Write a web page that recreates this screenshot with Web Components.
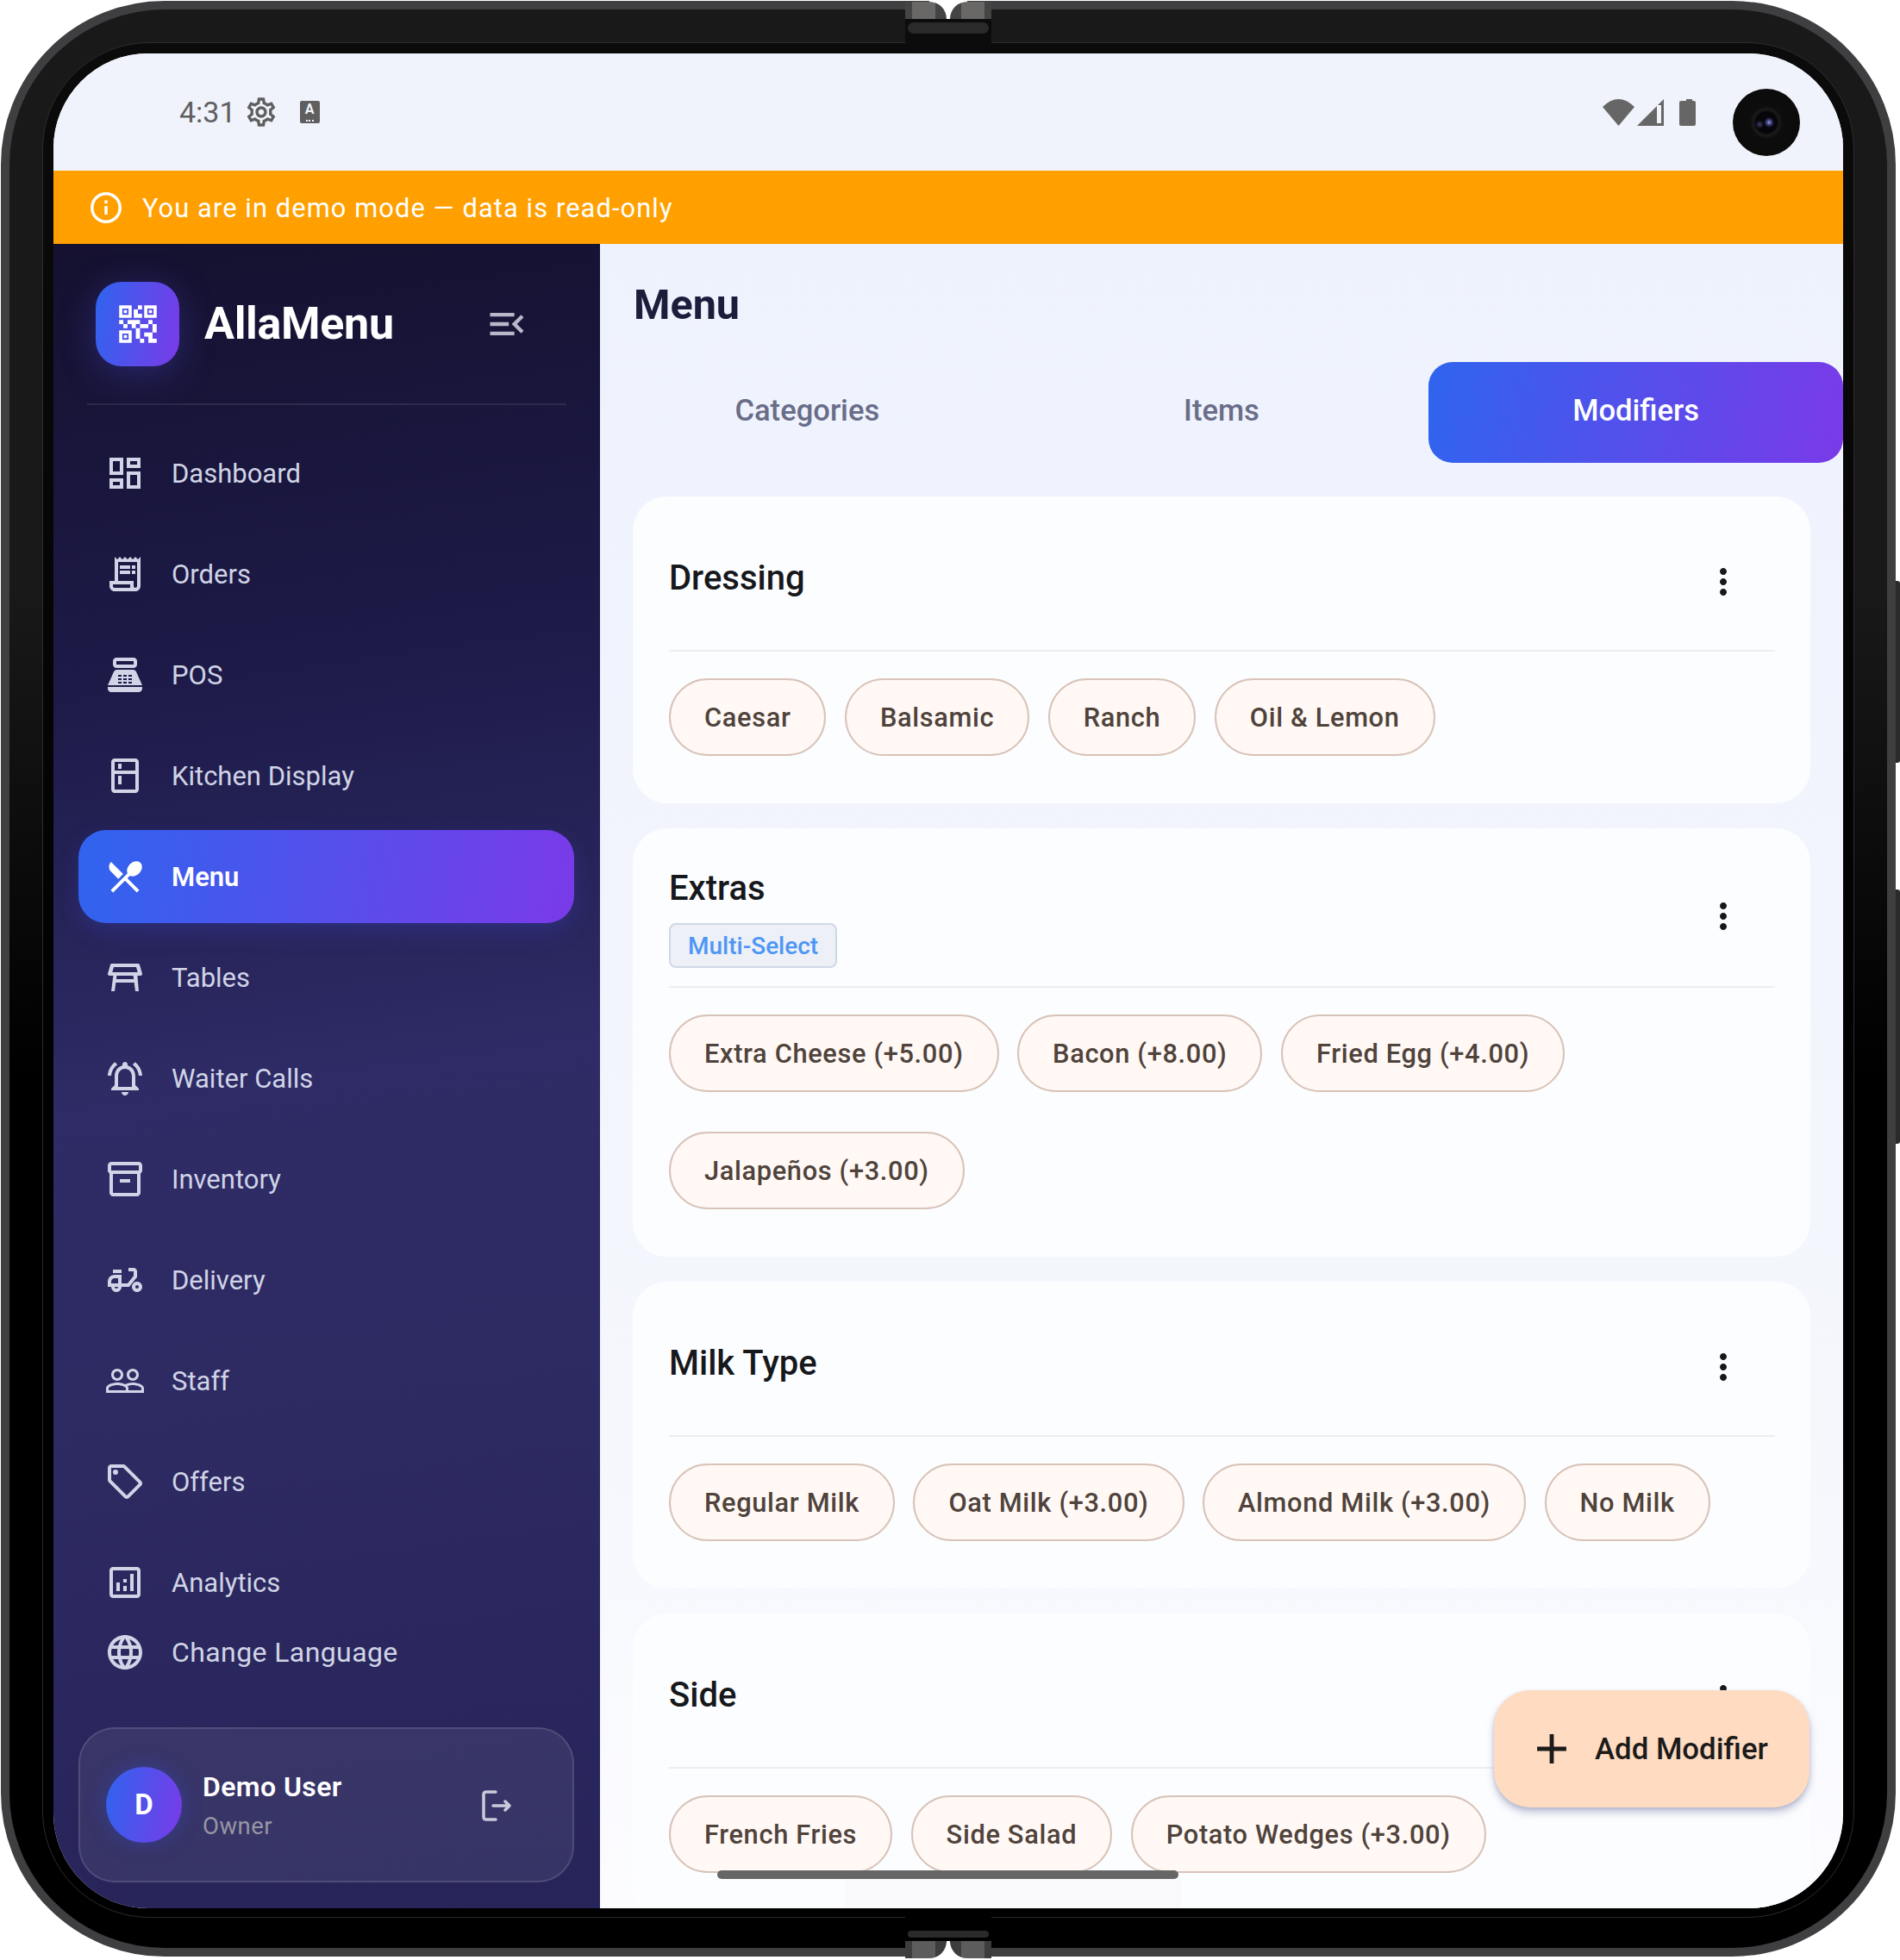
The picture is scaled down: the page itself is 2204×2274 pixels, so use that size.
<!DOCTYPE html>
<html lang="en">
<head>
<meta charset="utf-8">
<title>AllaMenu</title>
<style>
  html, body { margin: 0; background: #fff; }
  body { font-family: Roboto, "Liberation Sans", sans-serif; }
</style>
</head>
<body>
<app-device>
  <status-bar slot="screen"></status-bar>
  <demo-banner slot="screen">You are in demo mode — data is read-only</demo-banner>
  <div slot="screen" style="flex:1;display:flex;min-height:0">
    <side-nav>
      <nav-item icon="dashboard">Dashboard</nav-item>
      <nav-item icon="receipt">Orders</nav-item>
      <nav-item icon="pos">POS</nav-item>
      <nav-item icon="kitchen">Kitchen Display</nav-item>
      <nav-item icon="restaurant" active>Menu</nav-item>
      <nav-item icon="table">Tables</nav-item>
      <nav-item icon="bell">Waiter Calls</nav-item>
      <nav-item icon="inventory">Inventory</nav-item>
      <nav-item icon="delivery">Delivery</nav-item>
      <nav-item icon="people">Staff</nav-item>
      <nav-item icon="offer">Offers</nav-item>
      <nav-item icon="analytics">Analytics</nav-item>
    </side-nav>
    <menu-page>
      <modifier-card title="Dressing">
        <mod-chip>Caesar</mod-chip><mod-chip>Balsamic</mod-chip><mod-chip>Ranch</mod-chip><mod-chip>Oil &amp; Lemon</mod-chip>
      </modifier-card>
      <modifier-card title="Extras" badge="Multi-Select">
        <mod-chip>Extra Cheese (+5.00)</mod-chip><mod-chip>Bacon (+8.00)</mod-chip><mod-chip>Fried Egg (+4.00)</mod-chip><mod-chip>Jalapeños (+3.00)</mod-chip>
      </modifier-card>
      <modifier-card title="Milk Type">
        <mod-chip>Regular Milk</mod-chip><mod-chip>Oat Milk (+3.00)</mod-chip><mod-chip>Almond Milk (+3.00)</mod-chip><mod-chip>No Milk</mod-chip>
      </modifier-card>
      <modifier-card title="Side">
        <mod-chip>French Fries</mod-chip><mod-chip>Side Salad</mod-chip><mod-chip>Potato Wedges (+3.00)</mod-chip>
      </modifier-card>
    </menu-page>
  </div>
</app-device>

<script>
(function () {
  'use strict';

  var GRAD = 'linear-gradient(100deg, #2f64ee, #7a3ae8)';

  // material icon paths, 24 unit box
  var ICONS = {
    dashboard: 'M19 5v2h-4V5h4M9 5v6H5V5h4m10 8v6h-4v-6h4M9 17v2H5v-2h4M21 3h-8v6h8V3zM11 3H3v10h8V3zm10 8h-8v10h8V11zm-10 4H3v6h8v-6z',
    receipt: 'M19.5 3.5 18 2l-1.5 1.5L15 2l-1.5 1.5L12 2l-1.5 1.5L9 2 7.5 3.5 6 2v14H3v3c0 1.66 1.34 3 3 3h12c1.66 0 3-1.34 3-3V2l-1.5 1.5zM15 20H6c-.55 0-1-.45-1-1v-1h10v2zm4-1c0 .55-.45 1-1 1s-1-.45-1-1v-3H8V5h11v14zM9 7h6v2H9zm7 0h2v2h-2zm-7 3h6v2H9zm7 0h2v2h-2z',
    pos: 'M17 2H7c-1.1 0-2 .9-2 2v2c0 1.1.9 2 2 2h10c1.1 0 2-.9 2-2V4c0-1.1-.9-2-2-2zm0 4H7V4h10v2zm3 16H4c-1.1 0-2-.9-2-2v-1h20v1c0 1.1-.9 2-2 2zm-1.47-11.81C18.21 9.47 17.49 9 16.7 9H7.3c-.79 0-1.51.47-1.83 1.19L2 18h20l-3.47-7.81zM8 12h2v1H8zm0 2h2v1H8zm0 2h2v1H8zm3-4h2v1h-2zm0 2h2v1h-2zm0 2h2v1h-2zm3-4h2v1h-2zm0 2h2v1h-2zm0 2h2v1h-2z',
    kitchen: 'M18 2.01 6 2c-1.1 0-2 .89-2 2v16c0 1.1.9 2 2 2h12c1.1 0 2-.9 2-2V4c0-1.11-.9-1.99-2-1.99zM18 20H6v-9.02h12V20zm0-11H6V4h12v5zM8 5h2v3H8zm0 7h2v5H8z',
    restaurant: 'm8.1 13.34 2.83-2.83L3.91 3.5c-1.56 1.56-1.56 4.09 0 5.66l4.19 4.18zm6.78-1.81c1.53.71 3.68.21 5.27-1.38 1.91-1.91 2.28-4.65.81-6.12-1.46-1.46-4.2-1.1-6.12.81-1.59 1.59-2.09 3.74-1.38 5.27L3.7 19.87l1.41 1.41L12 14.41l6.88 6.88 1.41-1.41L13.41 13l1.47-1.47z',
    table: 'M21.96 9.73l-1.43-5c-.12-.43-.52-.73-.96-.73H4.43c-.45 0-.84.3-.96.73l-1.43 5c-.18.63.3 1.27.96 1.27h2.2L4 20h2l.67-5h10.67l.66 5h2l-.8-9H21c.66 0 1.14-.64.96-1.27zM6.93 13l.27-2h9.6l.27 2H6.93zM4.65 9l.86-3h12.97l.86 3H4.65z',
    bell: 'M7.58 4.08 6.15 2.65C3.75 4.48 2.17 7.3 2.03 10.5h2c.15-2.65 1.51-4.97 3.55-6.42zm12.39 6.42h2c-.15-3.2-1.73-6.02-4.12-7.85l-1.42 1.43c2.02 1.45 3.39 3.77 3.54 6.42zM18 11c0-3.07-1.64-5.64-4.5-6.32V4c0-.83-.67-1.5-1.5-1.5s-1.5.67-1.5 1.5v.68C7.63 5.36 6 7.92 6 11v5l-2 2v1h16v-1l-2-2v-5zm-2 6H8v-6c0-2.48 1.51-4.5 4-4.5s4 2.02 4 4.5v6zm-4 5c.14 0 .27-.01.4-.04.65-.14 1.18-.58 1.44-1.18.1-.24.15-.5.15-.78h-4c.01 1.1.9 2 2.01 2z',
    inventory: 'M20 2H4c-1 0-2 .9-2 2v3.01c0 .72.43 1.34 1 1.69V20c0 1.1 1.1 2 2 2h14c.9 0 2-.9 2-2V8.7c.57-.35 1-.97 1-1.69V4c0-1.1-1-2-2-2zm-1 18H5V9h14v11zm1-13H4V4h16v3zM9 12h6v2H9z',
    delivery: 'M19 7c0-1.1-.9-2-2-2h-3v2h3v2.65L13.52 14H10V9H6c-2.21 0-4 1.79-4 4v3h2c0 1.66 1.34 3 3 3s3-1.34 3-3h4.48L19 10.35V7zM4 14v-1c0-1.1.9-2 2-2h2v3H4zm3 3c-.55 0-1-.45-1-1h2c0 .55-.45 1-1 1zM5 6h5v2H5zM19 13c-1.66 0-3 1.34-3 3s1.34 3 3 3 3-1.34 3-3-1.34-3-3-3zm0 4c-.55 0-1-.45-1-1s.45-1 1-1 1 .45 1 1-.45 1-1 1z',
    people: 'M16.5 13c-1.2 0-3.07.34-4.5 1-1.43-.67-3.3-1-4.5-1C5.33 13 1 14.08 1 16.25V19h22v-2.75c0-2.17-4.33-3.25-6.5-3.25zm-4 4.5h-10v-1.25c0-.54 2.56-1.75 5-1.75s5 1.21 5 1.75v1.25zm9 0H14v-1.25c0-.46-.2-.86-.52-1.22.88-.3 1.96-.53 3.02-.53 2.44 0 5 1.21 5 1.75v1.25zM7.5 12c1.93 0 3.5-1.57 3.5-3.5S9.43 5 7.5 5 4 6.57 4 8.5 5.57 12 7.5 12zm0-5.5c1.1 0 2 .9 2 2s-.9 2-2 2-2-.9-2-2 .9-2 2-2zm9 5.5c1.93 0 3.5-1.57 3.5-3.5S18.43 5 16.5 5 13 6.57 13 8.5s1.57 3.5 3.5 3.5zm0-5.5c1.1 0 2 .9 2 2s-.9 2-2 2-2-.9-2-2 .9-2 2-2z',
    offer: 'M21.41 11.58l-9-9C12.05 2.22 11.55 2 11 2H4c-1.1 0-2 .9-2 2v7c0 .55.22 1.05.59 1.42l9 9c.36.36.86.58 1.41.58s1.05-.22 1.41-.59l7-7c.37-.36.59-.86.59-1.41s-.23-1.06-.59-1.42zM13 20.01L4 11V4h7v-.01l9 9-7 7.02zM6.5 5a1.5 1.5 0 1 0 0 3 1.5 1.5 0 0 0 0-3z',
    analytics: 'M9 17H7v-5h2v5zm4 0h-2v-3h2v3zm0-5h-2v-2h2v2zm4 5h-2V7h2v10zm2 2H5V5h14v14zm0-16H5c-1.1 0-2 .9-2 2v14c0 1.1.9 2 2 2h14c1.1 0 2-.9 2-2V5c0-1.1-.9-2-2-2z',
    language: 'M11.99 2C6.47 2 2 6.48 2 12s4.47 10 9.99 10C17.52 22 22 17.52 22 12S17.52 2 11.99 2zm6.93 6h-2.95c-.32-1.25-.78-2.45-1.38-3.56 1.84.63 3.37 1.91 4.33 3.56zM12 4.04c.83 1.2 1.48 2.53 1.91 3.96h-3.82c.43-1.43 1.08-2.76 1.91-3.96zM4.26 14C4.1 13.36 4 12.69 4 12s.1-1.36.26-2h3.38c-.08.66-.14 1.32-.14 2s.06 1.34.14 2H4.26zm.82 2h2.95c.32 1.25.78 2.45 1.38 3.56-1.84-.63-3.37-1.9-4.33-3.56zm2.95-8H5.08c.96-1.66 2.49-2.93 4.33-3.56C8.81 5.55 8.35 6.75 8.03 8zM12 19.96c-.83-1.2-1.48-2.53-1.91-3.96h3.82c-.43 1.43-1.08 2.76-1.91 3.96zM14.34 14H9.66c-.09-.66-.16-1.32-.16-2s.07-1.35.16-2h4.68c.09.65.16 1.32.16 2s-.07 1.34-.16 2zm.25 5.56c.6-1.11 1.06-2.31 1.38-3.56h2.95c-.96 1.65-2.49 2.93-4.33 3.56zM16.36 14c.08-.66.14-1.32.14-2s-.06-1.34-.14-2h3.38c.16.64.26 1.31.26 2s-.1 1.36-.26 2h-3.38z',
    menuOpen: 'M3 18h13v-2H3v2zm0-5h10v-2H3v2zm0-7v2h13V6H3zm18 9.59L17.42 12 21 8.41 19.59 7l-5 5 5 5L21 15.59z',
    qr: 'M15,21h-2v-2h2V21z M13,14h-2v5h2V14z M21,12h-2v4h2V12z M19,10h-2v2h2V10z M7,12H5v2h2V12z M5,10H3v2h2V10z M12,5h2V3h-2V5z M4.5,4.5v3h3v-3H4.5z M9,9H3V3h6V9z M4.5,16.5v3h3v-3H4.5z M9,21H3v-6h6V21z M16.5,4.5v3h3v-3H16.5z M21,9h-6V3h6V9z M19,19v-3l-4,0v2h2v3h4v-2H19z M17,12l-4,0v2h4V12z M13,10H7v2h2v2h2v-2h2V10z M14,9V7h-2V5h-2v4L14,9z M6.75,5.25h-1.5v1.5h1.5V5.25z M6.75,17.25h-1.5v1.5h1.5V17.25z M18.75,5.25h-1.5v1.5h1.5V5.25z',
    gear: 'M19.43 12.98c.04-.32.07-.64.07-.98 0-.34-.03-.66-.07-.98l2.11-1.65c.19-.15.24-.42.12-.64l-2-3.46c-.09-.16-.26-.25-.44-.25-.06 0-.12.01-.17.03l-2.49 1c-.52-.4-1.08-.73-1.69-.98l-.38-2.65C14.46 2.18 14.25 2 14 2h-4c-.25 0-.46.18-.49.42l-.38 2.65c-.61.25-1.17.59-1.69.98l-2.49-1c-.06-.02-.12-.03-.18-.03-.17 0-.34.09-.43.25l-2 3.46c-.13.22-.07.49.12.64l2.11 1.65c-.04.32-.07.65-.07.98 0 .33.03.66.07.98l-2.11 1.65c-.19.15-.24.42-.12.64l2 3.46c.09.16.26.25.44.25.06 0 .12-.01.17-.03l2.49-1c.52.4 1.08.73 1.69.98l.38 2.65c.03.24.24.42.49.42h4c.25 0 .46-.18.49-.42l.38-2.65c.61-.25 1.17-.59 1.69-.98l2.49 1c.06.02.12.03.18.03.17 0 .34-.09.43-.25l2-3.46c.12-.22.07-.49-.12-.64l-2.11-1.65zm-1.98-1.71c.04.31.05.52.05.73 0 .21-.02.43-.05.73l-.14 1.13.89.7 1.08.84-.7 1.21-1.27-.51-1.04-.42-.9.68c-.43.32-.84.56-1.25.73l-1.06.43-.16 1.13-.2 1.35h-1.4l-.19-1.35-.16-1.13-1.06-.43c-.43-.18-.83-.41-1.23-.71l-.91-.7-1.06.43-1.27.51-.7-1.21 1.08-.84.89-.7-.14-1.13c-.03-.31-.05-.54-.05-.74s.02-.43.05-.73l.14-1.13-.89-.7-1.08-.84.7-1.21 1.27.51 1.04.42.9-.68c.43-.32.84-.56 1.25-.73l1.06-.43.16-1.13.2-1.35h1.39l.19 1.35.16 1.13 1.06.43c.43.18.83.41 1.23.71l.91.7 1.06-.43 1.27-.51.7 1.21-1.07.85-.89.7.14 1.13zM12 8c-2.21 0-4 1.79-4 4s1.79 4 4 4 4-1.79 4-4-1.79-4-4-4zm0 6c-1.1 0-2-.9-2-2s.9-2 2-2 2 .9 2 2-.9 2-2 2z',
    moreVert: 'M12 8c1.1 0 2-.9 2-2s-.9-2-2-2-2 .9-2 2 .9 2 2 2zm0 2c-1.1 0-2 .9-2 2s.9 2 2 2 2-.9 2-2-.9-2-2-2zm0 6c-1.1 0-2 .9-2 2s.9 2 2 2 2-.9 2-2-.9-2-2-2z',
    add: 'M19 13h-6v6h-2v-6H5v-2h6V5h2v6h6v2z'
  };

  function icon(name, size) {
    return '<svg width="' + size + '" height="' + size + '" viewBox="0 0 24 24" fill="currentColor" style="display:block;flex:none"><path fill-rule="evenodd" d="' + ICONS[name] + '"/></svg>';
  }

  function shadow(el, html) {
    el.attachShadow({ mode: 'open' }).innerHTML = html;
  }

  // phone frame with the two hinges and the side buttons
  class AppDevice extends HTMLElement {
    connectedCallback() {
      shadow(this, `
        <style>
          :host { display: block; position: relative; width: 2204px; height: 2274px; overflow: hidden; }
          .shell {
            box-sizing: border-box; width: 2198px; height: 2269px; margin: 1px 0 0 1px;
            border: 10px solid #3f3f41; border-radius: 190px;
            padding: 38px 38px 35px;
            background: linear-gradient(180deg, #191919 0, #191919 30%, #000 55%);
          }
          .bezel {
            box-sizing: border-box; height: 100%;
            border: 1px solid #2c2c2c; border-radius: 124px; padding: 12px 12px 10px;
            background: linear-gradient(180deg, #0b0b0b, #000 60%);
          }
          .screen {
            position: relative; height: 100%; border-radius: 110px; overflow: hidden;
            display: flex; flex-direction: column; background: #f0f3fb;
          }
          .btn { position: absolute; left: 2199px; width: 5px; background: #2a2a2a; border-radius: 0 3px 3px 0; }
          .hinge { position: absolute; left: 1050px; width: 100px; height: 62px; }
          .hinge.top { top: 0; }
          .hinge.bottom { top: 2214px; }
          .hinge .gap { position: absolute; left: 28px; width: 44px; height: 22px; background: #fff; }
          .hinge .mid { position: absolute; left: 0; right: 0; background: #0c0c0c; }
          .hinge .pill { position: absolute; left: 3px; right: 3px; height: 13px; border-radius: 7px; background: #2a2a2a; }
          .hinge .wing { position: absolute; width: 48px; height: 20px; }
          .top .gap { top: 0; }
          .top .mid { top: 22px; bottom: 0; }
          .top .pill { top: 26px; }
          .top .wing { top: 2px; }
          .top .wing.l { left: 0; border-top-right-radius: 20px; background: linear-gradient(90deg, #454545 8px, #6a6866 8px, #6a6866 35px, #444 35px); }
          .top .wing.r { right: 0; border-top-left-radius: 20px; background: linear-gradient(270deg, #454545 8px, #6a6866 8px, #6a6866 35px, #444 35px); }
          .bottom .gap { top: 40px; }
          .bottom .mid { top: 0; height: 38px; background: #000; }
          .bottom .pill { top: 26px; height: 8px; }
          .bottom .wing { top: 38px; height: 20px; }
          .bottom .wing.l { left: 0; border-bottom-right-radius: 20px; background: linear-gradient(90deg, #3d3d3d 8px, #5c5c5c 8px, #5c5c5c 35px, #3d3d3d 35px); }
          .bottom .wing.r { right: 0; border-bottom-left-radius: 20px; background: linear-gradient(270deg, #3d3d3d 8px, #5c5c5c 8px, #5c5c5c 35px, #3d3d3d 35px); }
          .notch { position: absolute; left: 48px; width: 4px; background: #fff; }
          .top .notch { top: 0; height: 22px; }
          .bottom .notch { top: 38px; height: 22px; }
        </style>
        <div class="shell"><div class="bezel"><div class="screen"><slot name="screen"></slot>
          <div style="position:absolute;left:770px;bottom:34px;width:535px;height:10px;border-radius:5px;background:#666"></div>
        </div></div></div>
        <div class="btn" style="top:674px;height:211px"></div>
        <div class="btn" style="top:1032px;height:295px"></div>
        <div class="hinge top"><div class="gap"></div><div class="wing l"></div><div class="wing r"></div><div class="notch"></div><div class="mid"></div><div class="pill"></div></div>
        <div class="hinge bottom"><div class="mid"></div><div class="pill"></div><div class="gap"></div><div class="wing l"></div><div class="wing r"></div><div class="notch"></div></div>
      `);
    }
  }

  class StatusBar extends HTMLElement {
    connectedCallback() {
      shadow(this, `
        <style>
          :host { display: flex; align-items: center; flex: none; height: 136px; box-sizing: border-box; padding: 0 0 0 146px; color: #5f5f5f; background: #f0f3fb; position: relative; }
          .time { font: 400 34px/1 Roboto, sans-serif; margin-top: -1px; }
          .gear { margin-left: 9px; }
          .kbd { position: relative; box-sizing: border-box; margin-left: 25px; width: 23px; height: 26px; border-radius: 2px; background: #5f5f5f; color: #f0f3fb; font: 700 16px/20px Roboto, sans-serif; text-align: center; }
          .kbd::after { content: ""; position: absolute; left: 7px; bottom: 2px; width: 9px; height: 2px; background: repeating-linear-gradient(90deg, #f0f3fb 0 2px, transparent 2px 3.5px); }
          .right { margin-left: auto; display: flex; align-items: center; margin-right: 171px; }
          .cam { position: absolute; left: 1948px; top: 41px; width: 78px; height: 78px; border-radius: 50%;
                 background: radial-gradient(circle at 54% 50%, #9a9ad0 0, #3c3a78 3px, transparent 6px),
                             radial-gradient(circle at 40% 53%, #3c3a68 0, transparent 5px),
                             radial-gradient(circle at 50% 50%, #05050a 0, #05050a 12px, #1b1b1b 15px, #0d0d0d 19px, #0a0a0a 100%); }
        </style>
        <span class="time">4:31</span>
        <span class="gear">${icon('gear', 40)}</span>
        <div class="kbd">A</div>
        <div class="right">
          <svg width="108" height="33" viewBox="0 0 108 33" fill="#666" style="display:block">
            <path d="M0 10 Q18.500 -8 37 10 L18.500 32 Z"/>
            <path d="M71 1 V32 H40 Z"/>
            <path d="M63 8 H68 V29 H63 Z" fill="#f0f3fb"/>
            <path d="M93 3 H97 V1 H104 V3 H106 Q108 3 108 5 V30 Q108 32 106 32 H91 Q89 32 89 30 V5 Q89 3 91 3 Z"/>
          </svg>
        </div>
        <div class="cam"></div>
      `);
    }
  }

  class DemoBanner extends HTMLElement {
    connectedCallback() {
      shadow(this, `
        <style>
          :host { display: flex; align-items: center; flex: none; height: 85px; box-sizing: border-box; padding-left: 43px; gap: 24px; background: #ffa000; color: #fff; font: 400 30.8px/1 Roboto, sans-serif; letter-spacing: 1.1px; }
          svg { display: block; }
          span { padding-top: 3px; }
        </style>
        <svg width="36" height="36" viewBox="0 0 36 36" fill="none" stroke="#fff" stroke-width="3.500"><circle cx="18" cy="18" r="16.250"/><path d="M18 16v10M18 9.500v3.500"/></svg>
        <span><slot></slot></span>
      `);
    }
  }

  class SideNav extends HTMLElement {
    connectedCallback() {
      shadow(this, `
        <style>
          :host { display: flex; flex-direction: column; flex: none; width: 634px; background: linear-gradient(172deg, #15112f 0, #1d1a48 25%, #2e2b66 50%, #2e2a62 68%, #27245a 100%); color: #d0d4e6; }
          header { display: flex; align-items: center; height: 187px; margin: 0 39px; padding-left: 10px; box-sizing: border-box; border-bottom: 2px solid rgba(255,255,255,.09); }
          .logo { width: 97px; height: 98px; border-radius: 30px; background: ${GRAD}; display: flex; align-items: center; justify-content: center; color: #fff; box-shadow: 0 8px 40px rgba(70,70,190,.4); flex: none; }
          .brand { font: 700 52px/1 Roboto, sans-serif; color: #fff; margin-left: 29px; letter-spacing: -.3px; }
          .collapse { margin-left: auto; margin-right: 43px; color: #b9b8ca; }
          nav { display: flex; flex-direction: column; gap: 9px; margin-top: 25px; }
          .lang { display: flex; align-items: center; height: 53px; padding-left: 59px; gap: 30px; }
          .lang span { font: 400 32px/1 Roboto, sans-serif; letter-spacing: .4px; }
          .user { display: flex; align-items: center; box-sizing: border-box; height: 180px; margin: auto 30px 30px 29px; border: 2px solid rgba(255,255,255,.12); border-radius: 42px; background: rgba(255,255,255,.07); padding-left: 30px; }
          .avatar { width: 88px; height: 88px; border-radius: 50%; background: ${GRAD}; color: #fff; font: 700 33px/88px Roboto, sans-serif; text-align: center; box-shadow: 0 0 24px rgba(50,80,230,.35); flex: none; }
          .who { margin-left: 24px; display: flex; flex-direction: column; gap: 16px; padding-top: 2px; }
          .name { font: 600 32px/1 Roboto, sans-serif; color: #fff; letter-spacing: .4px; }
          .role { font: 400 27.5px/1 Roboto, sans-serif; color: #9796a4; letter-spacing: .5px; }
          .logout { margin-left: auto; margin-right: 71px; margin-top: 2px; }
        </style>
        <header>
          <div class="logo">${icon('qr', 58)}</div>
          <div class="brand">AllaMenu</div>
          <div class="collapse">${icon('menuOpen', 52)}</div>
        </header>
        <nav><slot></slot></nav>
        <div class="lang">${icon('language', 48)}<span>Change Language</span></div>
        <div class="user">
          <div class="avatar">D</div>
          <div class="who"><span class="name">Demo User</span><span class="role">Owner</span></div>
          <svg class="logout" width="34" height="36" viewBox="0 0 34 36" fill="none" stroke="#c9cbdb" stroke-width="3.500" stroke-linecap="round" stroke-linejoin="round" style="display:block"><path d="M16 2H5Q2 2 2 5V31Q2 34 5 34H16"/><path d="M13 18H32M27 13L32 18L27 23"/></svg>
        </div>
      `);
    }
  }

  class NavItem extends HTMLElement {
    connectedCallback() {
      shadow(this, `
        <style>
          :host { display: flex; align-items: center; height: 108px; box-sizing: border-box; margin: 0 30px 0 29px; padding-left: 30px; gap: 30px; border-radius: 32px; font: 400 31px/1 Roboto, sans-serif; color: #d0d4e6; }
          :host([active]) { background: ${GRAD}; color: #fff; font-weight: 600; box-shadow: 0 10px 24px rgba(60,70,210,.25); }
        </style>
        ${icon(this.getAttribute('icon'), 48)}
        <span><slot></slot></span>
      `);
    }
  }

  // title, the three tabs and the scrolled card list
  class MenuPage extends HTMLElement {
    connectedCallback() {
      shadow(this, `
        <style>
          :host { display: block; flex: 1; min-width: 0; position: relative; overflow: hidden; background: linear-gradient(180deg, #eef2fd 0, #f5f7fd 70%, #fcfcff 100%); }
          h1 { margin: 43px 0 0 39px; font: 700 48.5px/56px Roboto, sans-serif; color: #1c1d3b; }
          .tabs { display: grid; grid-template-columns: repeat(3, 1fr); height: 117px; margin-top: 38px; font: 500 34.6px/113px Roboto, sans-serif; text-align: center; color: #696d88; }
          .on { background: ${GRAD}; color: #fff; border-radius: 28px; }
          .list { display: flex; flex-direction: column; gap: 29px; margin: 39px 38px 0 38px; }
          .fab { position: absolute; right: 39px; bottom: 117px; display: flex; align-items: center; box-sizing: border-box; width: 366px; height: 136px; padding-left: 38px; gap: 21px; border-radius: 42px; background: #ffdbc2; color: #1c1b1a; font: 500 34.8px/1 Roboto, sans-serif; box-shadow: 0 6px 10px rgba(130,135,170,.45), 0 2px 4px rgba(130,135,170,.3); }
          .patch { position: absolute; left: 284px; width: 390px; bottom: 0; height: 34px; background: #faf9fc; }
        </style>
        <h1>Menu</h1>
        <div class="tabs"><div>Categories</div><div>Items</div><div class="on">Modifiers</div></div>
        <div class="list"><slot></slot></div>
        <div class="patch"></div>
        <div class="fab">${icon('add', 58)}<span>Add Modifier</span></div>
      `);
    }
  }

  class ModifierCard extends HTMLElement {
    connectedCallback() {
      var badge = this.getAttribute('badge');
      shadow(this, `
        <style>
          :host { display: block; box-sizing: border-box; padding: 41px 41px 55px 42px; border-radius: 40px; background: #fcfdff; flex: none; }
          .head { display: flex; align-items: center; min-height: 116px; padding-bottom: 21px; border-bottom: 2px solid #eceef3; }
          .col { flex: 1; }
          h2 { margin: 0 0 8px; font: 500 40px/58px Roboto, sans-serif; color: #17181c; }
          .badge { display: inline-block; box-sizing: border-box; height: 52px; margin-top: 3px; padding: 0 20px; border: 2px solid #cfd8e8; border-radius: 8px; background: #eef0f7; color: #4c96f6; font: 500 28px/49px Roboto, sans-serif; vertical-align: top; }
          .more { margin-right: 36px; color: #17181c; }
          .chips { display: flex; flex-wrap: wrap; gap: 46px 21.500px; margin-top: 31px; }
        </style>
        <div class="head">
          <div class="col"><h2>${this.getAttribute('title')}</h2>${badge ? '<div class="badge">' + badge + '</div>' : ''}</div>
          <div class="more">${icon('moreVert', 48)}</div>
        </div>
        <div class="chips"><slot></slot></div>
      `);
    }
  }

  class ModChip extends HTMLElement {
    connectedCallback() {
      shadow(this, `
        <style>
          :host { display: block; box-sizing: border-box; height: 90px; padding: 0 39px; border: 2px solid #d8c3b8; border-radius: 45px; background: #fff8f5; color: #4f433b; font: 500 30.8px/87px Roboto, sans-serif; letter-spacing: .65px; white-space: nowrap; }
        </style>
        <slot></slot>
      `);
    }
  }

  customElements.define('app-device', AppDevice);
  customElements.define('status-bar', StatusBar);
  customElements.define('demo-banner', DemoBanner);
  customElements.define('side-nav', SideNav);
  customElements.define('nav-item', NavItem);
  customElements.define('menu-page', MenuPage);
  customElements.define('modifier-card', ModifierCard);
  customElements.define('mod-chip', ModChip);
})();
</script>
</body>
</html>
